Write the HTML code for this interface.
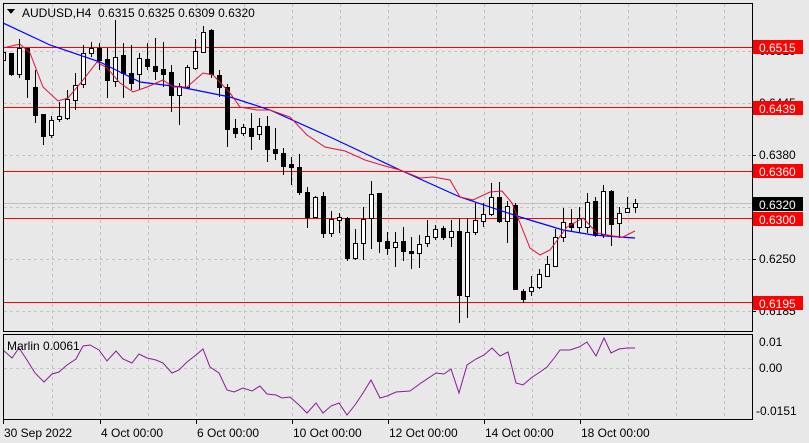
<!DOCTYPE html>
<html><head><meta charset="utf-8"><style>
html,body{margin:0;padding:0;background:#e8e8e8;}
svg{display:block;font-family:"Liberation Sans",sans-serif;}
</style></head><body>
<svg id="s" width="809" height="443" xmlns="http://www.w3.org/2000/svg" shape-rendering="crispEdges">
<rect width="809" height="443" fill="#e8e8e8"/>
<defs><clipPath id="c1"><rect x="4" y="4" width="748" height="327"/></clipPath>
<clipPath id="c2"><rect x="4" y="335" width="748" height="84"/></clipPath></defs>
<g id="grid" stroke="#c4c4c4" stroke-dasharray="3,3" stroke-width="1"></g>
<line x1="4" y1="203.5" x2="752" y2="203.5" stroke="#c0c0c0"/>
<g stroke="#ff0000" stroke-width="1">
<line x1="4" y1="47.5" x2="752" y2="47.5"/>
<line x1="4" y1="107.5" x2="752" y2="107.5"/>
<line x1="4" y1="171.5" x2="752" y2="171.5"/>
<line x1="4" y1="218.5" x2="752" y2="218.5"/>
<line x1="4" y1="302.5" x2="752" y2="302.5"/>
</g>
<g id="candles" clip-path="url(#c1)"></g>
<g clip-path="url(#c1)" fill="none" shape-rendering="auto">
<polyline stroke="#0000ff" stroke-width="1.2" points="3,23 50,45 100,62 140,82 180,87 230,97 270,110 330,137 400,170 460,197 520,217 563,230 593,235 620,237 635,238"/>
<polyline stroke="#e0103c" stroke-width="1" points="3,48 20,44 30,53 43,87 58,101 68,98 83,80 97,62 107,68 120,83 133,92 147,87 163,80 173,87 187,87 203,73 213,75 230,93 240,107 257,110 270,110 290,117 307,135 325,147 345,151 365,160 385,166 400,170 420,178 433,177 450,180 460,197 473,200 490,192 502,191 512,203 520,223 530,248 540,255 550,250 567,227 583,218 597,233 613,236 623,237 635,231"/>
</g>
<rect x="3.5" y="3.5" width="749" height="328" fill="none" stroke="#000"/>
<rect x="3.5" y="334.5" width="749" height="85" fill="none" stroke="#000"/>
<path d="M7 9 L15 9 L11 14 Z" fill="#000"/>
<text x="22" y="17" font-size="12" fill="#000">AUDUSD,H4&#160;&#160;0.6315 0.6325 0.6309 0.6320</text>
<g id="ax" font-size="12" fill="#000"></g>
<polyline clip-path="url(#c2)" shape-rendering="auto" fill="none" stroke="#8b1a9b" stroke-width="1" points="3,350 12,358 19,348 27,360 35,373 44,382 52,374 59,372 67,365 76,359 83,346 90,345 99,350 107,361 116,351 123,359 132,363 139,354 147,358 156,360 163,363 172,373 179,370 187,362 196,355 203,349 210,367 219,373 227,390 234,392 243,388 252,391 260,386 267,394 276,395 282,398 290,397 299,405 307,413 316,403 323,413 331,406 339,403 347,415 355,405 363,393 371,380 380,398 387,396 396,392 410,391 421,383 436,373 444,374 451,369 459,393 467,365 476,359 484,355 492,348 500,356 508,352 516,383 523,385 531,378 540,372 547,367 555,357 560,350 570,350 579,347 587,342 596,356 604,338 611,353 619,349 627,348 635,348"/>
<text x="7" y="350" font-size="12" fill="#000">Marlin 0.0061</text>
</svg>
<script>
var NS="http://www.w3.org/2000/svg";
function el(t,a,p,txt){var e=document.createElementNS(NS,t);for(var k in a)e.setAttribute(k,a[k]);if(txt)e.textContent=txt;p.appendChild(e);return e;}
var g=document.getElementById('grid');
for(var x=52;x<752;x+=48){el('line',{x1:x+.5,y1:4,x2:x+.5,y2:331},g);el('line',{x1:x+.5,y1:335,x2:x+.5,y2:419},g);}
[51,103,155,207,259,311].forEach(function(y){el('line',{x1:4,y1:y+.5,x2:752,y2:y+.5},g);});
el('line',{x1:4,y1:368.5,x2:752,y2:368.5},g);
var B=[[52,60,43,68,0],[53,74,53,76,1],[48,74,39,78,0],[48,79,48,98,1],[87,115,70,123,1],[114,136,114,145,1],[120,135,116,138,0],[116,119,102,122,0],[99,118,90,120,0],[85,100,73,110,0],[53,84,45,88,0],[48,53,42,57,0],[48,60,43,70,1],[59,80,48,98,1],[57,81,20,87,0],[55,73,43,98,1],[73,83,45,90,1],[58,74,53,90,0],[59,66,43,70,1],[66,71,38,80,1],[69,74,42,87,1],[72,95,65,112,1],[86,95,83,125,0],[67,87,65,89,0],[51,68,39,70,0],[32,52,26,53,0],[30,74,29,78,1],[75,87,70,97,1],[87,129,84,147,1],[128,133,119,138,1],[127,133,124,136,0],[128,136,113,150,1],[126,134,118,140,0],[126,149,116,162,1],[149,153,128,160,1],[153,166,148,175,1],[164,167,157,185,1],[167,192,154,195,1],[192,217,187,228,1],[197,217,196,218,0],[196,233,192,238,1],[219,233,211,237,0],[217,220,213,233,0],[218,258,217,261,1],[243,258,229,260,0],[219,243,207,260,0],[194,218,181,249,0],[193,241,193,253,1],[241,248,232,255,1],[242,247,232,267,0],[241,251,227,261,1],[251,253,237,269,1],[244,253,235,268,0],[236,243,220,247,0],[229,237,225,240,0],[228,237,226,240,1],[231,237,220,247,0],[231,295,219,323,1],[232,296,219,318,0],[220,232,203,235,0],[214,221,203,227,0],[197,214,183,216,0],[197,221,182,223,1],[206,221,201,243,0],[205,289,203,290,1],[291,299,289,303,1],[287,291,276,296,0],[274,287,269,289,0],[264,276,256,277,0],[237,266,229,267,0],[222,237,208,242,0],[223,227,209,232,1],[218,227,207,233,0],[202,227,193,233,0],[201,235,197,237,1],[191,234,185,238,0],[191,224,190,246,1],[213,223,207,238,0],[208,212,197,213,0],[203,207,199,213,0]];
var cg=document.getElementById('candles');
B.forEach(function(b,i){var x=3+8*i;
el('line',{x1:x+.5,y1:b[2],x2:x+.5,y2:b[3],stroke:'#000'},cg);
el('rect',{x:x-1.5,y:b[0]+.5,width:4,height:Math.max(1,b[1]-b[0]),fill:b[4]?'#000':'#fff',stroke:'#000'},cg);});
var ax=document.getElementById('ax');
[[51,'0.6510'],[103,'0.6445'],[155,'0.6380'],[207,'0.6315'],[259,'0.6250'],[311,'0.6185']].forEach(function(a){
el('line',{x1:752,y1:a[0]+.5,x2:756,y2:a[0]+.5,stroke:'#000'},ax);el('text',{x:759,y:a[0]+4},ax,a[1]);});
[[342,'0.01'],[368,'0.00'],[411,'-0.0151']].forEach(function(a){el('text',{x:a[1][0]=='-'?756:759,y:a[0]+4},ax,a[1]);});
[[47,'0.6515','#ff0000'],[108,'0.6439','#ff0000'],[171,'0.6360','#ff0000'],[204,'0.6320','#000'],[219,'0.6300','#ff0000'],[303,'0.6195','#ff0000']].forEach(function(a){
el('rect',{x:753,y:a[0]-7,width:50,height:14,fill:a[2]},ax);el('text',{x:759,y:a[0]+5,fill:'#fff'},ax,a[1]);});
[[3,'30 Sep 2022'],[100,'4 Oct 00:00'],[196,'6 Oct 00:00'],[292,'10 Oct 00:00'],[388,'12 Oct 00:00'],[484,'14 Oct 00:00'],[580,'18 Oct 00:00']].forEach(function(a){
el('line',{x1:a[0]+.5,y1:419,x2:a[0]+.5,y2:424,stroke:'#000'},ax);el('text',{x:a[0]+1,y:437},ax,a[1]);});
</script>
</body></html>
